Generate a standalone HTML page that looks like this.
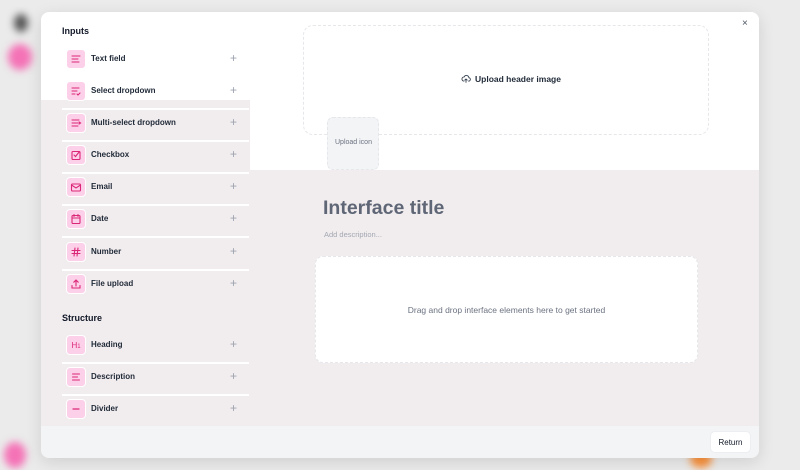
<!DOCTYPE html>
<html><head><meta charset="utf-8"><style>
*{box-sizing:border-box;margin:0;padding:0}
body{width:800px;height:470px;overflow:hidden;background:#ebebeb;font-family:"Liberation Sans",sans-serif;position:relative}
.blob{position:absolute;border-radius:50%;filter:blur(4px)}
.modal{position:absolute;left:41px;top:12px;width:718px;height:446px;border-radius:8px;overflow:hidden;background:#f1ecee;box-shadow:0 4px 16px rgba(0,0,0,.12)}
.abs{position:absolute}
.t{position:absolute;white-space:nowrap}
.row{position:absolute;left:21px;width:187px;height:32px}
.row .ic{position:absolute;left:4px;top:-1px;width:20px;height:20px;border-radius:4px;background:#fdd0ea;border:1px solid #fff;display:flex;align-items:center;justify-content:center}
.row .lb{position:absolute;left:29px;top:4px;font-size:8px;font-weight:bold;color:#1f2937}
.row .pl{position:absolute;left:168px;top:1px;font-size:12px;color:#9ca3af}
.row .ln{position:absolute;left:0;top:26px;width:187px;height:2px;background:#fff}
svg{display:block}
</style></head><body>
<div class="blob" style="left:8px;top:44px;width:24px;height:26px;background:#f472b6"></div>
<div class="blob" style="left:4px;top:442px;width:22px;height:26px;background:#f472b6"></div>
<div class="blob" style="left:14px;top:14px;width:14px;height:18px;background:#555"></div>
<div class="blob" style="left:690px;top:450px;width:22px;height:18px;background:#fb923c"></div>
<div class="modal">
  <div class="abs" style="left:0;top:0;width:718px;height:88px;background:#fff"></div>
  <div class="abs" style="left:209px;top:0;width:509px;height:158px;background:#fff"></div>
  <div class="t" style="left:21px;top:14px;font-size:9px;font-weight:bold;color:#111827">Inputs</div>
  <div class="row" style="top:38px"><div class="ic"><svg width="12" height="12" viewBox="0 0 12 12" fill="none" stroke="#db2777" stroke-width="1.1" stroke-linecap="round"><path d="M2 3h8M2 6h6M2 9h7"/></svg></div><div class="lb">Text field</div><div class="pl">+</div><div class="ln"></div></div>
  <div class="row" style="top:70px"><div class="ic"><svg width="12" height="12" viewBox="0 0 12 12" fill="none" stroke="#db2777" stroke-width="1.1" stroke-linecap="round"><path d="M2 3h7M2 6h5M2 9h3M7 9l1 1 2-2"/></svg></div><div class="lb">Select dropdown</div><div class="pl">+</div><div class="ln"></div></div>
  <div class="row" style="top:102px"><div class="ic"><svg width="12" height="12" viewBox="0 0 12 12" fill="none" stroke="#db2777" stroke-width="1.1" stroke-linecap="round"><path d="M2 3h7M2 6h6M2 9h6M9 5l1.5 1L9 7"/></svg></div><div class="lb">Multi-select dropdown</div><div class="pl">+</div><div class="ln"></div></div>
  <div class="row" style="top:134px"><div class="ic"><svg width="12" height="12" viewBox="0 0 12 12" fill="none" stroke="#db2777" stroke-width="1.1" stroke-linecap="round"><rect x="2" y="2.5" width="8" height="8" rx="1"/><path d="M4 6l1.5 1.5L9.5 2.5"/></svg></div><div class="lb">Checkbox</div><div class="pl">+</div><div class="ln"></div></div>
  <div class="row" style="top:166px"><div class="ic"><svg width="12" height="12" viewBox="0 0 12 12" fill="none" stroke="#db2777" stroke-width="1.1" stroke-linecap="round"><rect x="1.5" y="3" width="9" height="7" rx="1"/><path d="M1.5 4l4.5 3 4.5-3"/></svg></div><div class="lb">Email</div><div class="pl">+</div><div class="ln"></div></div>
  <div class="row" style="top:198px"><div class="ic"><svg width="12" height="12" viewBox="0 0 12 12" fill="none" stroke="#db2777" stroke-width="1.1" stroke-linecap="round"><rect x="2" y="2.5" width="8" height="8" rx="1"/><path d="M2 5h8M4 1.5v2M8 1.5v2"/></svg></div><div class="lb">Date</div><div class="pl">+</div><div class="ln"></div></div>
  <div class="row" style="top:231px"><div class="ic"><svg width="12" height="12" viewBox="0 0 12 12" fill="none" stroke="#db2777" stroke-width="1.1" stroke-linecap="round"><path d="M2 4.5h8M2 7.5h8M5 2L4 10M8 2L7 10"/></svg></div><div class="lb">Number</div><div class="pl">+</div><div class="ln"></div></div>
  <div class="row" style="top:263px"><div class="ic"><svg width="12" height="12" viewBox="0 0 12 12" fill="none" stroke="#db2777" stroke-width="1.1" stroke-linecap="round"><path d="M2 7.5V10h8V7.5M6 8V2M3.8 4.2L6 2l2.2 2.2"/></svg></div><div class="lb">File upload</div><div class="pl">+</div></div>
  <div class="t" style="left:21px;top:301px;font-size:9px;font-weight:bold;color:#111827">Structure</div>
  <div class="row" style="top:324px"><div class="ic"><span style="font-size:8px;color:#db2777">H<small style="font-size:6px">1</small></span></div><div class="lb">Heading</div><div class="pl">+</div><div class="ln"></div></div>
  <div class="row" style="top:356px"><div class="ic"><svg width="12" height="12" viewBox="0 0 12 12" fill="none" stroke="#db2777" stroke-width="1.1" stroke-linecap="round"><path d="M2.5 3h7M2.5 6h5M2.5 9h7"/></svg></div><div class="lb">Description</div><div class="pl">+</div><div class="ln"></div></div>
  <div class="row" style="top:388px"><div class="ic"><svg width="12" height="12" viewBox="0 0 12 12" fill="none" stroke="#db2777" stroke-width="1.2" stroke-linecap="round"><path d="M3 6h6"/></svg></div><div class="lb">Divider</div><div class="pl">+</div></div>

  <div class="abs" style="left:262px;top:13px;width:406px;height:110px;border:1px dashed #e5e7eb;border-radius:10px;background:#fff"></div>
  <div class="t" style="left:420px;top:62px;font-size:8.5px;font-weight:bold;color:#1f2937;display:flex;align-items:center;gap:4px"><svg width="10" height="10" viewBox="0 0 12 12" fill="none" stroke="#374151" stroke-width="1.1" stroke-linecap="round"><path d="M3.5 8.5a2.5 2.5 0 0 1 .3-5A3 3 0 0 1 9.5 4.5a2 2 0 0 1-.5 4M6 6v4M4.5 7.3L6 6l1.5 1.3"/></svg>Upload header image</div>
  <div class="abs" style="left:286px;top:105px;width:52px;height:53px;border:1px dashed #e5e7eb;border-radius:6px;background:#f3f4f6"></div>
  <div class="t" style="left:294px;top:127px;font-size:7px;color:#6b7280">Upload icon</div>
  <div class="t" style="left:282px;top:185px;font-size:19.5px;font-weight:bold;color:#5f6777">Interface title</div>
  <div class="t" style="left:283px;top:218px;font-size:7.5px;color:#a3a8b2">Add description...</div>
  <div class="abs" style="left:274px;top:244px;width:383px;height:107px;border:1.5px dashed #e5e7eb;border-radius:8px;background:#fff"></div>
  <div class="t" style="left:274px;top:293px;width:383px;text-align:center;font-size:8.5px;color:#6b7280">Drag and drop interface elements here to get started</div>
  <div class="abs" style="left:0;top:414px;width:718px;height:32px;background:#f3f4f6"></div>
  <div class="abs" style="left:669px;top:419px;width:41px;height:22px;background:#fff;border:1px solid #eceef1;border-radius:5px;font-size:8px;color:#111827;display:flex;align-items:center;justify-content:center">Return</div>
  <div class="t" style="left:701px;top:6px;font-size:10px;color:#4b5563">×</div>
</div>
</body></html>
